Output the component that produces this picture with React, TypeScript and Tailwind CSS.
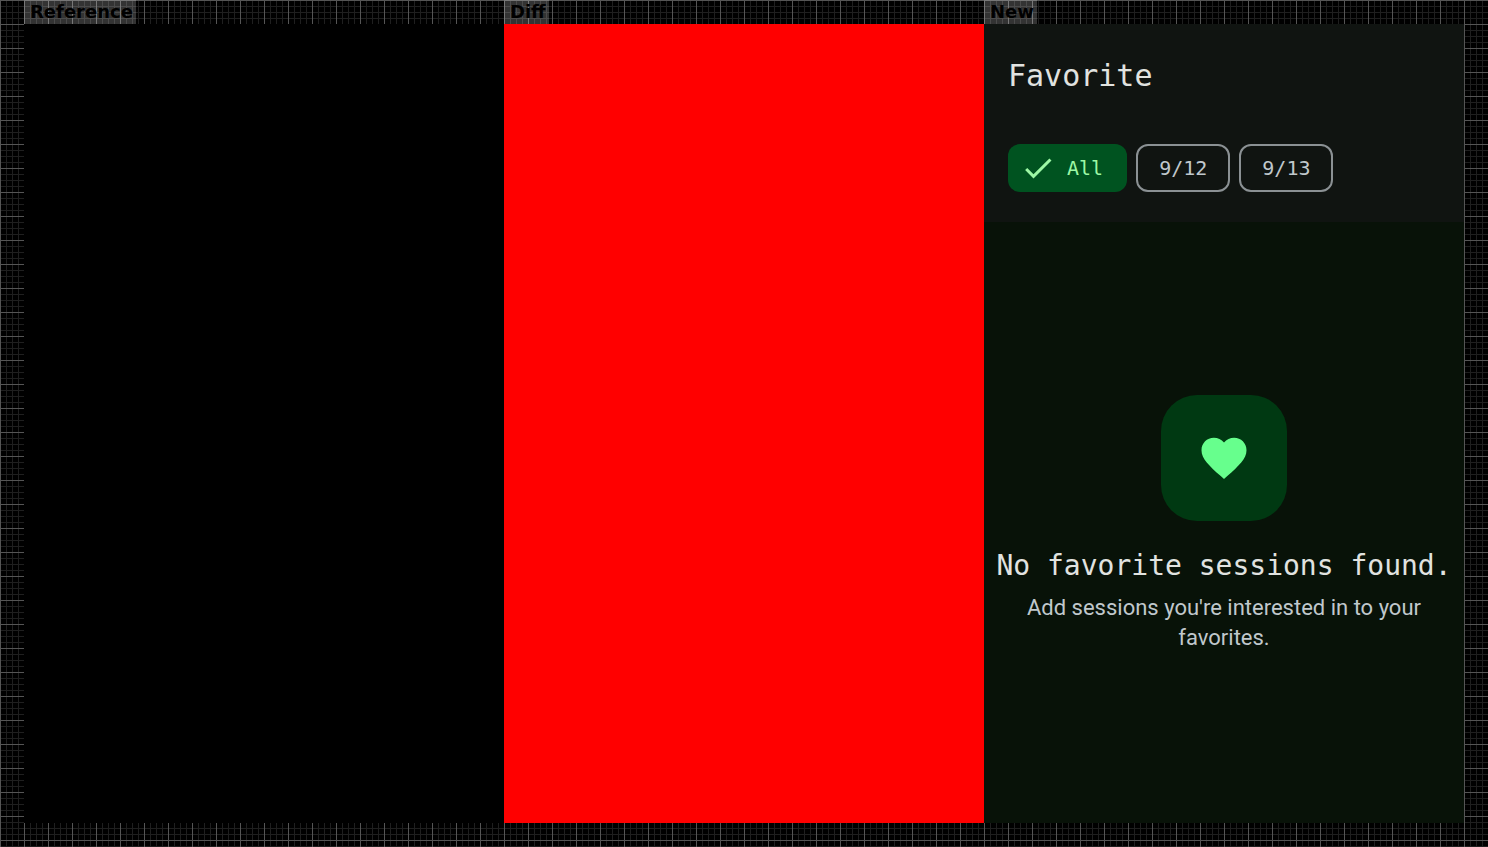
import { useState } from "react";
import type { ReactNode } from "react";

const days = ["All", "9/12", "9/13"];

function CheckIcon() {
  return (
    <svg viewBox="0 0 24 24" className="size-9 shrink-0" fill="currentColor" aria-hidden="true">
      <path d="M9 16.17 4.83 12l-1.42 1.41L9 19 21 7l-1.41-1.41z" />
    </svg>
  );
}

function HeartIcon() {
  return (
    <svg viewBox="0 0 24 24" className="size-[54px]" fill="currentColor" aria-hidden="true">
      <path d="m12 21.35-1.45-1.32C5.4 15.36 2 12.28 2 8.5 2 5.42 4.42 3 7.5 3c1.74 0 3.41.81 4.5 2.09C13.09 3.81 14.76 3 16.5 3 19.58 3 22 5.42 22 8.5c0 3.78-3.4 6.86-8.55 11.54L12 21.35z" />
    </svg>
  );
}

function Panel({ label, children }: { label: string; children: ReactNode }) {
  return (
    <section className="flex min-w-0 flex-1 flex-col">
      <h2 className="h-6 self-start bg-white/20 pr-[3px] pl-[6px] font-['DejaVu_Sans',sans-serif] text-[18px] leading-6 font-bold text-black">
        {label}
      </h2>
      {children}
    </section>
  );
}

function FavoriteScreen() {
  const [selected, setSelected] = useState("All");
  return (
    <div className="flex flex-1 flex-col bg-[#081208]">
      <header className="bg-[#101411] px-6 pt-7 pb-[30px]">
        <h1 className="font-['DejaVu_Sans_Mono',monospace] text-[30px] leading-[48px] text-[#e1e3e0]">Favorite</h1>
        <div className="mt-11 flex gap-[9px]">
          {days.map((day) => (
            <button
              key={day}
              type="button"
              aria-pressed={selected === day}
              onClick={() => setSelected(day)}
              className={
                "flex h-12 items-center rounded-xl font-['DejaVu_Sans_Mono',monospace] text-[20px] leading-6 " +
                (selected === day
                  ? "gap-[11px] bg-[#005320] pr-6 pl-3 text-[#9df8a5]"
                  : "border-2 border-[#8b9194] px-[21px] text-[#c0c8cc]")
              }
            >
              {selected === day && <CheckIcon />}
              {day}
            </button>
          ))}
        </div>
      </header>
      <main className="flex flex-1 flex-col items-center justify-center pt-[3px] text-center">
        <div className="flex size-[126px] items-center justify-center rounded-[36px] bg-[#003912] text-[#67ff8d]">
          <HeartIcon />
        </div>
        <p className="mt-6 font-['DejaVu_Sans_Mono',monospace] text-[28px] leading-[42px] whitespace-nowrap text-[#e1e3e0]">
          No favorite sessions found.
        </p>
        <p className="mt-[6px] px-6 font-[Roboto,sans-serif] text-[22px] leading-[30px] text-[#c0c8cc]">
          Add sessions you're interested in to your favorites.
        </p>
      </main>
    </div>
  );
}

export default function App() {
  return (
    <div className="flex min-h-screen bg-black bg-[linear-gradient(#555_1px,transparent_1px),linear-gradient(90deg,#555_1px,transparent_1px),linear-gradient(#1f1f1f_1px,transparent_1px),linear-gradient(90deg,#1f1f1f_1px,transparent_1px)] bg-[length:24px_24px,24px_24px,6px_6px,6px_6px] px-6 pb-6">
      <Panel label="Reference">
        <div className="flex-1 bg-black" />
      </Panel>
      <Panel label="Diff">
        <div className="flex-1 bg-[#ff0000]" />
      </Panel>
      <Panel label="New">
        <FavoriteScreen />
      </Panel>
    </div>
  );
}
